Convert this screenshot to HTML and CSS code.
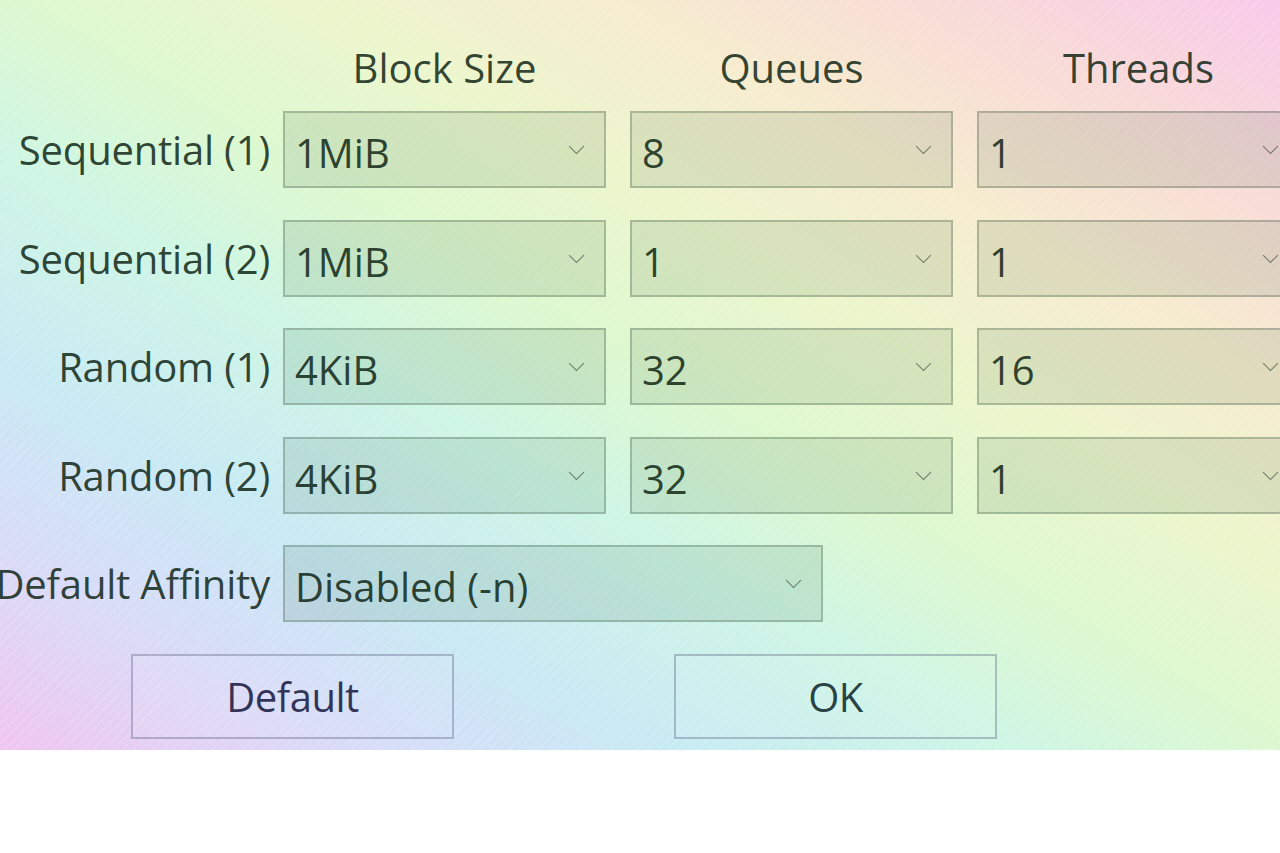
FILE: index.html
```html
<!DOCTYPE html>
<html>
<head>
	<title>Settings</title>

	<link rel="stylesheet" href="styles.css">
</head>
<body>
	<div id="dialog">
		<div class="head">
			<div class="spacer"></div>
			<div class="col">Block Size</div>
			<div class="col">Queues</div>
			<div class="col">Threads</div>
		</div>

		<div class="rows">
			<div class="row">
				<div class="label">Sequential (1)</div>
				<div class="combo"><span>1MiB</span><i></i></div>
				<div class="combo"><span>8</span><i></i></div>
				<div class="combo"><span>1</span><i></i></div>
			</div>
			<div class="row">
				<div class="label">Sequential (2)</div>
				<div class="combo"><span>1MiB</span><i></i></div>
				<div class="combo"><span>1</span><i></i></div>
				<div class="combo"><span>1</span><i></i></div>
			</div>
			<div class="row">
				<div class="label">Random (1)</div>
				<div class="combo"><span>4KiB</span><i></i></div>
				<div class="combo"><span>32</span><i></i></div>
				<div class="combo"><span>16</span><i></i></div>
			</div>
			<div class="row">
				<div class="label">Random (2)</div>
				<div class="combo"><span>4KiB</span><i></i></div>
				<div class="combo"><span>32</span><i></i></div>
				<div class="combo"><span>1</span><i></i></div>
			</div>
			<div class="row">
				<div class="label">Default Affinity</div>
				<div class="combo wide"><span>Disabled (-n)</span><i></i></div>
			</div>
		</div>

		<div class="buttons">
			<div class="btn">Default</div>
			<div class="btn ok">OK</div>
		</div>
	</div>
</body>
</html>
```

FILE: styles.css
```css
html, body {
	margin: 0;
	padding: 0;
	background: #ffffff;
	overflow: hidden;
}

#dialog {
	height: 750px;
	width: 1280px;
	overflow: hidden;
	font-family: "Open Sans", "Noto Sans", sans-serif;
	font-size: 40px;
	color: rgba(10, 30, 15, 0.84);
	background:
		repeating-linear-gradient(135deg, rgba(255, 255, 255, 0.10) 0px, rgba(255, 255, 255, 0.10) 2px, transparent 2px, transparent 7px),
		linear-gradient(to top right, #f0c6f0 0%, #d8dcf8 14%, #c8eaf4 26%, #cef6e4 40%, #dcf8d0 50%, #ecf6cc 62%, #f6ecce 74%, #f8dcd6 86%, #f8caea 100%);
}

.head {
	display: flex;
	padding-top: 44px;
	height: 48px;
	line-height: 48px;
	margin-bottom: 19px;
}

.head .spacer {
	width: 283px;
	flex: none;
}

.head .col {
	width: 323px;
	flex: none;
	margin-right: 24px;
	text-align: center;
}

.rows {
	display: flex;
	flex-direction: column;
	gap: 31.5px;
}

.row {
	display: flex;
	align-items: center;
	height: 77px;
}

.label {
	width: 270px;
	flex: none;
	margin-right: 13px;
	display: flex;
	justify-content: flex-end;
	white-space: nowrap;
	letter-spacing: -0.2px;
}

.combo {
	position: relative;
	box-sizing: border-box;
	width: 323px;
	height: 77px;
	flex: none;
	margin-right: 24px;
	padding: 6px 0 0 10px;
	display: flex;
	align-items: center;
	background: rgba(40, 80, 50, 0.11);
	border: 2px solid rgba(60, 85, 65, 0.30);
}

.combo.wide {
	width: 540px;
}

.combo i {
	position: absolute;
	right: 22px;
	top: 28px;
	width: 10px;
	height: 10px;
	border-right: 1.8px solid rgba(40, 55, 45, 0.6);
	border-bottom: 1.8px solid rgba(40, 55, 45, 0.6);
	transform: rotate(45deg);
}

.buttons {
	display: flex;
	margin-top: 32px;
	padding-left: 131px;
	gap: 220px;
}

.btn {
	box-sizing: border-box;
	width: 323px;
	height: 85px;
	border: 2px solid rgba(80, 85, 120, 0.35);
	background: rgba(255, 255, 255, 0.06);
	display: flex;
	align-items: center;
	justify-content: center;
	letter-spacing: -0.5px;
	color: rgba(20, 20, 60, 0.85);
}

.btn.ok {
	color: rgba(10, 35, 40, 0.85);
}
```
